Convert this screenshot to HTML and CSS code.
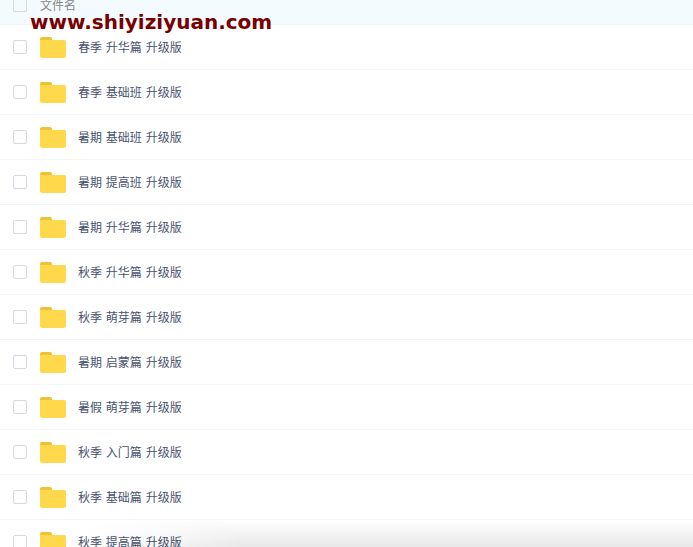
FILE: index.html
```
<!DOCTYPE html>
<html lang="zh-CN">
<head>
  <meta charset="UTF-8">
  <meta name="viewport" content="width=device-width, initial-scale=1.0">
  <title>文件列表</title>
  <link rel="stylesheet" href="styles.css">
</head>
<body>
<svg class="sprite" aria-hidden="true">
  <symbol id="folder" viewBox="0 0 26 21">
    <path fill="#f0c135" d="M0 6V2Q0 0 2 0H10Q12 0 12 2V6Z"/>
    <path fill="#ffd84b" d="M0 3H24.5Q26 3 26 4.5V19Q26 21 24 21H2Q0 21 0 19Z"/>
  </symbol>
</svg>
<div class="file-list">
  <div class="list-header">
    <input type="checkbox" id="all">
    <label for="all">文件名</label>
  </div>
  <ul>
    <li class="row"><input type="checkbox" id="f1"><svg class="folder"><use href="#folder"/></svg><label for="f1">春季 升华篇 升级版</label></li>
    <li class="row"><input type="checkbox" id="f2"><svg class="folder"><use href="#folder"/></svg><label for="f2">春季 基础班 升级版</label></li>
    <li class="row"><input type="checkbox" id="f3"><svg class="folder"><use href="#folder"/></svg><label for="f3">暑期 基础班 升级版</label></li>
    <li class="row"><input type="checkbox" id="f4"><svg class="folder"><use href="#folder"/></svg><label for="f4">暑期 提高班 升级版</label></li>
    <li class="row"><input type="checkbox" id="f5"><svg class="folder"><use href="#folder"/></svg><label for="f5">暑期 升华篇 升级版</label></li>
    <li class="row"><input type="checkbox" id="f6"><svg class="folder"><use href="#folder"/></svg><label for="f6">秋季 升华篇 升级版</label></li>
    <li class="row"><input type="checkbox" id="f7"><svg class="folder"><use href="#folder"/></svg><label for="f7">秋季 萌芽篇 升级版</label></li>
    <li class="row"><input type="checkbox" id="f8"><svg class="folder"><use href="#folder"/></svg><label for="f8">暑期 启蒙篇 升级版</label></li>
    <li class="row"><input type="checkbox" id="f9"><svg class="folder"><use href="#folder"/></svg><label for="f9">暑假 萌芽篇 升级版</label></li>
    <li class="row"><input type="checkbox" id="f10"><svg class="folder"><use href="#folder"/></svg><label for="f10">秋季 入门篇 升级版</label></li>
    <li class="row"><input type="checkbox" id="f11"><svg class="folder"><use href="#folder"/></svg><label for="f11">秋季 基础篇 升级版</label></li>
    <li class="row"><input type="checkbox" id="f12"><svg class="folder"><use href="#folder"/></svg><label for="f12">秋季 提高篇 升级版</label></li>
  </ul>
</div>
<div class="watermark">www.shiyiziyuan.com</div>
<div class="bottom-shade"></div>
</body>
</html>
```

FILE: styles.css
```
* {
  box-sizing: border-box;
}
body {
  margin: 0;
  height: 100vh;
  overflow: hidden;
  background: #fff;
  color: #48536f;
  font: 12px/18px "DejaVu Sans", "Noto Sans CJK SC", sans-serif;
}
.sprite {
  display: none;
}
/* header is partly scrolled off the top */
.file-list {
  margin-top: -15px;
}
.list-header,
.row {
  display: flex;
  align-items: center;
  padding: 0 13px;
}
.list-header {
  height: 40px;
  background: #f3fbff;
  border-bottom: 1px solid #edf4fa;
  color: #888;
}
ul {
  margin: 0;
  padding: 0;
  list-style: none;
}
.row {
  height: 45px;
  border-bottom: 1px solid #f2f6fa;
}
label {
  padding-top: 2px;
}
input {
  appearance: none;
  flex: none;
  width: 14px;
  height: 14px;
  margin: 0 13px 0 0;
  border: 1px solid #d5d9e5;
  border-radius: 2px;
  background: #fff;
}
.list-header input {
  background: transparent;
}
.folder {
  flex: none;
  width: 26px;
  height: 21px;
  margin-right: 12px;
}
.watermark {
  position: absolute;
  top: 10px;
  left: 30px;
  color: #780000;
  font-size: 20px;
  font-weight: bold;
  line-height: 24px;
}
.bottom-shade {
  position: fixed;
  left: 80px;
  right: 0;
  bottom: 0;
  height: 28px;
  background: linear-gradient(rgba(0, 0, 0, 0), rgba(0, 0, 0, 0.09));
  -webkit-mask-image: linear-gradient(to right, transparent, #000 160px);
  mask-image: linear-gradient(to right, transparent, #000 160px);
  pointer-events: none;
}
```
